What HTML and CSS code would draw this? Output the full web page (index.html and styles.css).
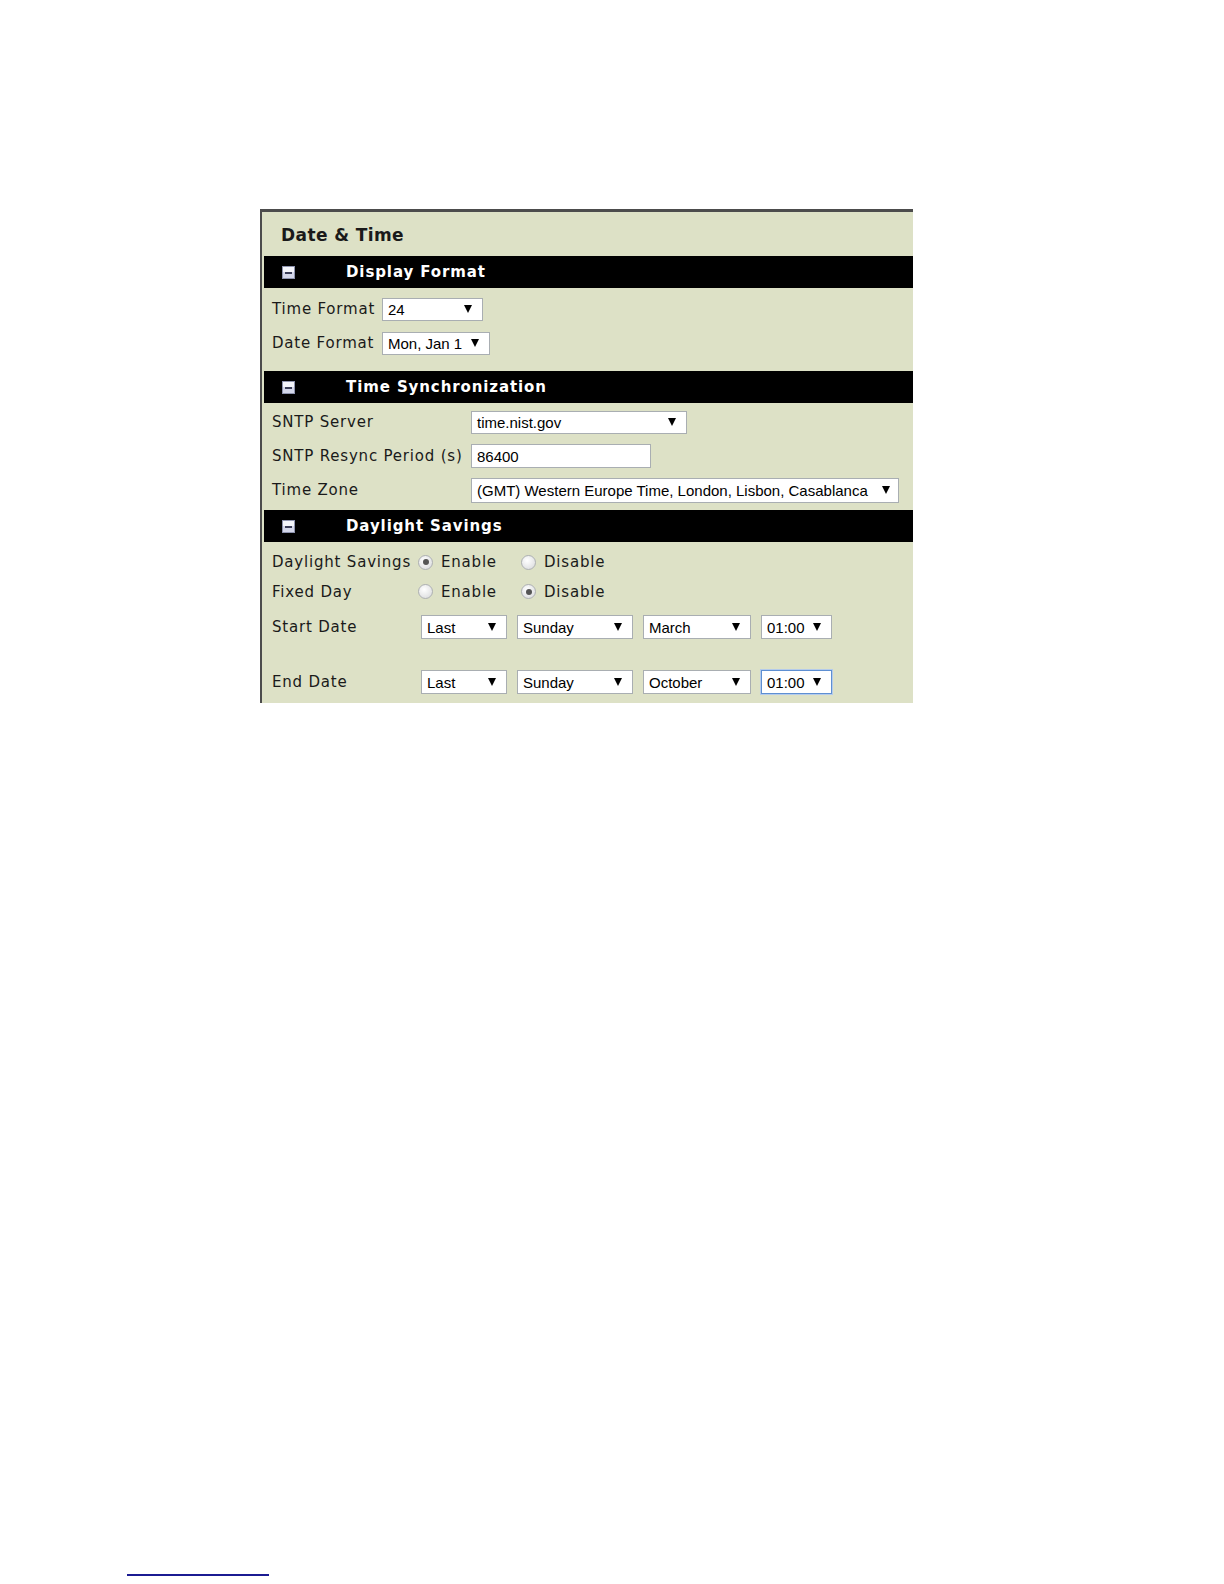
FILE: index.html
```html
<!DOCTYPE html>
<html lang="en">

<head>
    <meta charset="UTF-8">
    <title>Date &amp; Time</title>
    <link rel="stylesheet" href="styles.css">
</head>

<body>
    <div class="panel">
        <div class="title">Date &amp; Time</div>

        <div class="bar">
            <svg class="toggle" viewBox="0 0 13 13"><rect x="0.5" y="0.5" width="12" height="12" fill="#d4d7ea" stroke="#8e93ae"/><rect x="1" y="1" width="11" height="5" fill="#f4f5fb"/><rect x="3" y="6" width="7" height="2" fill="#3a3d57"/></svg>
            <span class="bar-text">Display Format</span>
        </div>
        <div class="sect sect-fmt">
            <div class="row">
                <span class="lbl">Time Format</span>
                <span class="sel w-tf">24<svg viewBox="0 0 8 8"><polygon points="0,0 8,0 4,8"/></svg></span>
            </div>
            <div class="row">
                <span class="lbl">Date Format</span>
                <span class="sel w-df">Mon, Jan 1<svg viewBox="0 0 8 8"><polygon points="0,0 8,0 4,8"/></svg></span>
            </div>
        </div>

        <div class="bar">
            <svg class="toggle" viewBox="0 0 13 13"><rect x="0.5" y="0.5" width="12" height="12" fill="#d4d7ea" stroke="#8e93ae"/><rect x="1" y="1" width="11" height="5" fill="#f4f5fb"/><rect x="3" y="6" width="7" height="2" fill="#3a3d57"/></svg>
            <span class="bar-text">Time Synchronization</span>
        </div>
        <div class="sect sect-sync">
            <div class="row">
                <span class="lbl">SNTP Server</span>
                <span class="sel w-srv">time.nist.gov<svg viewBox="0 0 8 8"><polygon points="0,0 8,0 4,8"/></svg></span>
            </div>
            <div class="row">
                <span class="lbl">SNTP Resync Period (s)</span>
                <span class="field">86400</span>
            </div>
            <div class="row">
                <span class="lbl">Time Zone</span>
                <span class="sel w-tz">(GMT) Western Europe Time, London, Lisbon, Casablanca<svg viewBox="0 0 8 8"><polygon points="0,0 8,0 4,8"/></svg></span>
            </div>
        </div>

        <div class="bar">
            <svg class="toggle" viewBox="0 0 13 13"><rect x="0.5" y="0.5" width="12" height="12" fill="#d4d7ea" stroke="#8e93ae"/><rect x="1" y="1" width="11" height="5" fill="#f4f5fb"/><rect x="3" y="6" width="7" height="2" fill="#3a3d57"/></svg>
            <span class="bar-text">Daylight Savings</span>
        </div>
        <div class="sect sect-dst">
            <div class="row r-radio">
                <span class="lbl">Daylight Savings</span>
                <span class="opt"><span class="radio on"></span>Enable</span>
                <span class="opt"><span class="radio"></span>Disable</span>
            </div>
            <div class="row r-radio">
                <span class="lbl">Fixed Day</span>
                <span class="opt"><span class="radio"></span>Enable</span>
                <span class="opt"><span class="radio on"></span>Disable</span>
            </div>
            <div class="row r-start">
                <span class="lbl">Start Date</span>
                <div class="dates">
                    <span class="sel w-wk">Last<svg viewBox="0 0 8 8"><polygon points="0,0 8,0 4,8"/></svg></span>
                    <span class="sel w-day">Sunday<svg viewBox="0 0 8 8"><polygon points="0,0 8,0 4,8"/></svg></span>
                    <span class="sel w-mon">March<svg viewBox="0 0 8 8"><polygon points="0,0 8,0 4,8"/></svg></span>
                    <span class="sel w-hr">01:00<svg viewBox="0 0 8 8"><polygon points="0,0 8,0 4,8"/></svg></span>
                </div>
            </div>
            <div class="row r-end">
                <span class="lbl">End Date</span>
                <div class="dates">
                    <span class="sel w-wk">Last<svg viewBox="0 0 8 8"><polygon points="0,0 8,0 4,8"/></svg></span>
                    <span class="sel w-day">Sunday<svg viewBox="0 0 8 8"><polygon points="0,0 8,0 4,8"/></svg></span>
                    <span class="sel w-mon">October<svg viewBox="0 0 8 8"><polygon points="0,0 8,0 4,8"/></svg></span>
                    <span class="sel w-hr focus">01:00<svg viewBox="0 0 8 8"><polygon points="0,0 8,0 4,8"/></svg></span>
                </div>
            </div>
        </div>
    </div>

    <div class="footline"></div>
</body>

</html>
```

FILE: styles.css
```css
body {
    margin: 0;
    background: #fff;
    font-family: "DejaVu Sans", Verdana, sans-serif;
    color: #1a1a1a;
}

.panel {
    box-sizing: border-box;
    width: 653px;
    margin: 209px 0 0 260px;
    padding-left: 2px;
    background: #dde1c6;
    border-left: 2px solid #4c4c4c;
    border-top: 3px solid #4c4c4c;
}

.title {
    height: 44px;
    line-height: 46px;
    padding-left: 17px;
    font-size: 17px;
    font-weight: bold;
    letter-spacing: 0.4px;
}

.bar {
    display: flex;
    align-items: center;
    height: 32px;
    background: #000;
    color: #fff;
}

.toggle {
    width: 13px;
    height: 13px;
    margin-left: 18px;
    flex: none;
}

.bar-text {
    margin-left: 51px;
    font-size: 15px;
    font-weight: bold;
    letter-spacing: 0.9px;
}

.sect {
    padding-left: 8px;
}

.row {
    display: flex;
    align-items: center;
    height: 34px;
    font-size: 15px;
    letter-spacing: 0.8px;
}

.sect-fmt {
    padding-top: 4px;
    padding-bottom: 11px;
}

.sect-fmt .lbl {
    width: 110px;
}

.sect-sync {
    padding-top: 2px;
    padding-bottom: 3px;
}

.sect-sync .lbl {
    width: 199px;
}

.sect-dst {
    padding-top: 5px;
}

.sect-dst .lbl {
    width: 146px;
}

.r-radio {
    height: 29px;
}

.r-radio:first-child {
    height: 30px;
}

.r-start {
    height: 42px;
}

.r-end {
    height: 55px;
    align-items: flex-end;
    padding-bottom: 9px;
    box-sizing: border-box;
}

.r-end .lbl {
    line-height: 24px;
}

.sel,
.field {
    box-sizing: border-box;
    display: flex;
    align-items: center;
    justify-content: space-between;
    height: 23px;
    padding: 0 10px 0 5px;
    background: #fff;
    border: 1px solid #a9aeb2;
    font-family: "Liberation Sans", Arial, sans-serif;
    font-size: 15px;
    letter-spacing: 0;
    color: #000;
    white-space: nowrap;
}

.sel svg {
    width: 8px;
    height: 8px;
    flex: none;
}

.w-tf { width: 101px; }
.w-df { width: 108px; }
.w-srv { width: 216px; }
.w-tz { width: 428px; height: 25px; padding-right: 8px; }
.w-wk { width: 86px; }
.w-day { width: 116px; }
.w-mon { width: 108px; }
.w-hr { width: 71px; }

.field {
    width: 180px;
    height: 24px;
}

.focus {
    border-color: #5e8fd2;
    box-shadow: 0 0 0 1px #b4cbeb;
}

.opt {
    display: flex;
    align-items: center;
    width: 103px;
}

.radio {
    box-sizing: border-box;
    display: flex;
    align-items: center;
    justify-content: center;
    width: 15px;
    height: 15px;
    margin-right: 8px;
    border-radius: 50%;
    border: 1px solid #adb0b3;
    background: radial-gradient(circle at 40% 35%, #ffffff, #d6d7d9);
}

.radio.on::after {
    content: "";
    width: 6px;
    height: 6px;
    border-radius: 50%;
    background: #555;
}

.dates {
    display: flex;
    gap: 10px;
    margin-left: 3px;
}

.r-start .sel,
.r-end .sel {
    height: 24px;
}

.footline {
    width: 142px;
    height: 2px;
    margin: 871px 0 0 127px;
    background: #1b1b92;
}
```
